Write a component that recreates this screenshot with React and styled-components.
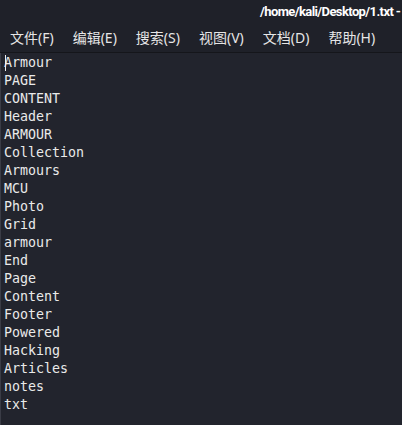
import styled, { createGlobalStyle } from "styled-components";

const GlobalStyle = createGlobalStyle`
  html, body {
    margin: 0;
    padding: 0;
    background: #1f2129;
  }
`;

const lines = [
  "Armour",
  "PAGE",
  "CONTENT",
  "Header",
  "ARMOUR",
  "Collection",
  "Armours",
  "MCU",
  "Photo",
  "Grid",
  "armour",
  "End",
  "Page",
  "Content",
  "Footer",
  "Powered",
  "Hacking",
  "Articles",
  "notes",
  "txt",
];

const menus = ["文件(F)", "编辑(E)", "搜索(S)", "视图(V)", "文档(D)", "帮助(H)"];

export default function App() {
  return (
    <>
      <GlobalStyle />
      <Window>
        <TitleBar>
          <Title>/home/kali/Desktop/1.txt -</Title>
        </TitleBar>
        <MenuBar>
          {menus.map((m) => (
            <MenuItem key={m}>{m}</MenuItem>
          ))}
        </MenuBar>
        <Editor>
          <Caret />
          {lines.map((l, i) => (
            <Line key={i}>{l}</Line>
          ))}
        </Editor>
      </Window>
    </>
  );
}

const Window = styled.div`
  width: 402px;
  height: 425px;
  display: flex;
  flex-direction: column;
  overflow: hidden;
  background: #1f2129;
`;

const TitleBar = styled.div`
  height: 22px;
  display: flex;
  align-items: center;
  padding-left: 260px;
  overflow: hidden;
`;

const Title = styled.span`
  font-family: Roboto, "Noto Sans", sans-serif;
  font-weight: 700;
  font-size: 13px;
  letter-spacing: -0.6px;
  color: #ffffff;
  white-space: nowrap;
`;

const MenuBar = styled.div`
  height: 30px;
  display: flex;
  align-items: center;
  gap: 19px;
  padding-left: 10px;
  border-bottom: 1px solid #15161b;
`;

const MenuItem = styled.span`
  font-family: "Noto Sans", "Noto Sans CJK SC", sans-serif;
  font-size: 14px;
  color: #e6e6e6;
  white-space: nowrap;
`;

const Editor = styled.div`
  position: relative;
  flex: 1;
  background: #22242d;
  border-left: 1px solid #3a3c46;
  padding: 1px 0 0 3px;
`;

const Caret = styled.div`
  position: absolute;
  left: 4px;
  top: 2px;
  width: 1px;
  height: 16px;
  background: #f0f0f0;
`;

const Line = styled.div`
  font-family: "DejaVu Sans Mono", monospace;
  font-size: 13.3px;
  font-weight: 500;
  line-height: 18px;
  height: 18px;
  color: #eaeaea;
  white-space: pre;
`;
